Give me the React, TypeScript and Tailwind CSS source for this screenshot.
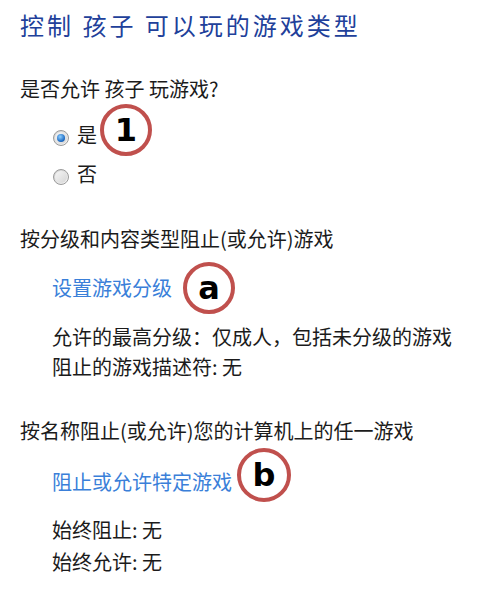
import React from "react";

const Badge = ({ label, className }: { label: string; className: string }) => (
  <span
    className={`absolute flex items-center justify-center rounded-full border-[4px] border-[#c0504d] bg-white text-[32px] font-bold leading-none text-black ${className}`}
    style={{ fontFamily: '"DejaVu Sans", sans-serif' }}
  >
    {label}
  </span>
);

const Radio = ({ checked }: { checked?: boolean }) => (
  <span className="relative flex h-[16px] w-[16px] shrink-0 items-center justify-center rounded-full border border-[#9a9a9a] bg-gradient-to-br from-[#cfcfcf] to-[#f7f7f7]">
    <span className="flex h-[12px] w-[12px] items-center justify-center rounded-full bg-gradient-to-br from-[#f6f6f6] to-[#d6d6d6]">
      {checked && (
        <span className="h-[8px] w-[8px] rounded-full bg-[radial-gradient(circle_at_40%_35%,#8fd0ff,#1f6cc4_65%,#134a8c)]" />
      )}
    </span>
  </span>
);

const App = () => {
  return (
    <div
      className="h-[608px] w-[501px] overflow-hidden bg-white pl-5 pt-[9px] text-[20px] text-[#1b1b1b]"
      style={{ fontFamily: '"Noto Sans CJK SC", "Noto Sans", sans-serif' }}
    >
      <h1 className="text-[24px] leading-[32px] tracking-[3px] text-[#21409a]">
        控制 孩子 可以玩的游戏类型
      </h1>

      <p className="mt-[33px] leading-[30px]">是否允许 孩子 玩游戏?</p>

      <div className="mt-[16px] flex flex-col gap-[9px] pl-[33px]">
        <label className="relative flex h-[30px] items-center gap-[8px]">
          <span className="mt-[5px]">
            <Radio checked />
          </span>
          <span>是</span>
          <Badge label="1" className="left-[47px] top-[-16px] h-[52px] w-[52px]" />
        </label>
        <label className="flex h-[30px] items-center gap-[8px]">
          <span className="mt-[5px]">
            <Radio />
          </span>
          <span>否</span>
        </label>
      </div>

      <p className="mt-[35px] leading-[30px]">按分级和内容类型阻止(或允许)游戏</p>

      <div className="pl-[32px]">
        <div className="relative mt-[19px] h-[30px] leading-[30px]">
          <a className="cursor-pointer text-[#3a7fd9]">设置游戏分级</a>
          <Badge label="a" className="left-[131px] top-[-11px] h-[52px] w-[52px]" />
        </div>
        <p className="mt-[19px] leading-[30px]">允许的最高分级：仅成人，包括未分级的游戏</p>
        <p className="leading-[30px]">阻止的游戏描述符: 无</p>
      </div>

      <p className="mt-[34px] leading-[30px]">按名称阻止(或允许)您的计算机上的任一游戏</p>

      <div className="pl-[32px]">
        <div className="relative mt-[21px] h-[30px] leading-[30px]">
          <a className="cursor-pointer text-[#3a7fd9]">阻止或允许特定游戏</a>
          <Badge label="b" className="left-[185px] top-[-19px] h-[54px] w-[54px]" />
        </div>
        <p className="mt-[18px] leading-[30px]">始终阻止: 无</p>
        <p className="mt-[2px] leading-[30px]">始终允许: 无</p>
      </div>
    </div>
  );
};

export default App;
